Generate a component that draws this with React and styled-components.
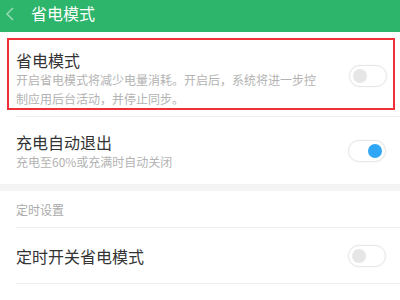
import React, { useState } from 'react';
import styled, { createGlobalStyle } from 'styled-components';

const GlobalStyle = createGlobalStyle`
  body {
    margin: 0;
    background: #fff;
    font-family: "Noto Sans CJK SC", "Noto Sans", sans-serif;
  }
  * {
    box-sizing: border-box;
  }
`;

const Page = styled.div`
  width: 400px;
  height: 300px;
  overflow: hidden;
  background: #fff;
`;

const Header = styled.div`
  height: 32px;
  background: #2db56b;
  display: flex;
  align-items: center;
  padding-left: 5px;
  gap: 16px;
`;

const BackIcon = styled.svg`
  width: 10px;
  height: 14px;
  margin-bottom: 4px;
`;

const HeaderTitle = styled.div`
  color: #fff;
  font-size: 16px;
  font-weight: 400;
  line-height: 1;
  margin-bottom: 6px;
`;

const Highlight = styled.div`
  height: 72px;
  margin: 6px 5px 0 7px;
  border: 2px solid #ee3038;
  padding: 10px 0 0 7px;
  display: flex;
  align-items: flex-start;
`;

const Row = styled.div`
  margin-left: 16px;
  margin-top: ${({ $mt }) => $mt || 0}px;
  border-top: ${({ $top }) => ($top ? '1px solid #eeeeee' : 'none')};
  border-bottom: ${({ $bottom }) => ($bottom ? '1px solid #eeeeee' : 'none')};
  height: ${({ $height }) => $height}px;
  display: flex;
  align-items: center;
  padding-right: 14px;
`;

const Texts = styled.div`
  flex: 1;
  display: flex;
  flex-direction: column;
  margin-top: ${({ $shift }) => $shift || 0}px;
`;

const Title = styled.div`
  color: #333;
  font-size: 16px;
  line-height: 20px;
`;

const Desc = styled.div`
  color: #b3b3b3;
  font-size: 12px;
  line-height: 19px;
  width: ${({ $width }) => $width || 'auto'};
`;

const Gap = styled.div`
  height: 7px;
  background: #f4f4f4;
`;

const SectionLabel = styled.div`
  margin-left: 16px;
  height: 37px;
  border-bottom: 1px solid #eeeeee;
  display: flex;
  align-items: center;
  color: #aaa;
  font-size: 12px;
`;

const SwitchSlot = styled.div`
  margin: 15px 6px 0 0;
`;

const Track = styled.div`
  width: 38px;
  height: 22px;
  border: 1px solid #e6e6e6;
  border-radius: 11px;
  background: #fff;
  position: relative;
  flex-shrink: 0;
  box-shadow: 0 0 2px rgba(0, 0, 0, 0.05);
`;

const Knob = styled.div`
  position: absolute;
  top: 3px;
  left: ${({ $on }) => ($on ? '19px' : '3px')};
  width: 14px;
  height: 14px;
  border-radius: 50%;
  background: ${({ $on }) => ($on ? '#2fa6f6' : '#e6e6e6')};
`;

const Switch = ({ on, onClick }) => (
  <Track onClick={onClick}>
    <Knob $on={on} />
  </Track>
);

export default function App() {
  const [saving, setSaving] = useState(false);
  const [autoExit, setAutoExit] = useState(true);
  const [timer, setTimer] = useState(false);

  return (
    <Page>
      <GlobalStyle />
      <Header>
        <BackIcon viewBox="0 0 10 14">
          <path d="M8 1 L2 7 L8 13" fill="none" stroke="rgba(255,255,255,0.55)" strokeWidth="1.4" />
        </BackIcon>
        <HeaderTitle>省电模式</HeaderTitle>
      </Header>
      <Highlight>
        <Texts>
          <Title>省电模式</Title>
          <Desc $width="310px">开启省电模式将减少电量消耗。开启后，系统将进一步控制应用后台活动，并停止同步。</Desc>
        </Texts>
        <SwitchSlot>
          <Switch on={saving} onClick={() => setSaving(!saving)} />
        </SwitchSlot>
      </Highlight>
      <Row $height={68} $mt={6} $top>
        <Texts $shift={1}>
          <Title>充电自动退出</Title>
          <Desc>充电至60%或充满时自动关闭</Desc>
        </Texts>
        <Switch on={autoExit} onClick={() => setAutoExit(!autoExit)} />
      </Row>
      <Gap />
      <SectionLabel>定时设置</SectionLabel>
      <Row $height={56} $bottom>
        <Texts>
          <Title>定时开关省电模式</Title>
        </Texts>
        <Switch on={timer} onClick={() => setTimer(!timer)} />
      </Row>
    </Page>
  );
}
